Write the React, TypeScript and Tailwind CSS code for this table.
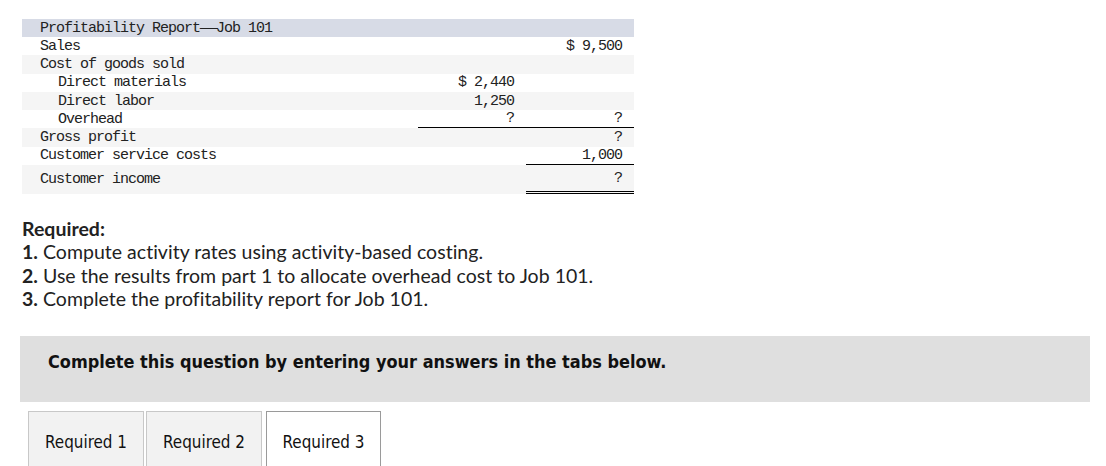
import React from "react";

const mono = { fontFamily: '"Liberation Mono", monospace' };

type Row = {
  label: React.ReactNode;
  indent?: boolean;
  mid?: string;
  right?: string;
  bg: string;
  midLine?: boolean;
  rightLine?: boolean;
  rightDouble?: boolean;
  tall?: boolean;
};

const rows: Row[] = [
  { label: "Sales", right: "$ 9,500", bg: "bg-white" },
  { label: "Cost of goods sold", bg: "bg-[#f5f5f5]" },
  { label: "Direct materials", indent: true, mid: "$ 2,440", bg: "bg-white" },
  { label: "Direct labor", indent: true, mid: "1,250", bg: "bg-[#f5f5f5]" },
  { label: "Overhead", indent: true, mid: "?", right: "?", bg: "bg-white", midLine: true, rightLine: true },
  { label: "Gross profit", right: "?", bg: "bg-[#f5f5f5]" },
  { label: "Customer service costs", right: "1,000", bg: "bg-white", rightLine: true },
  { label: "Customer income", right: "?", bg: "bg-[#f5f5f5]", rightDouble: true, tall: true },
];

export default function App() {
  return (
    <div className="w-[1106px] h-[466px] overflow-hidden bg-white relative">
      <div className="ml-[22px] pt-[19px] w-[612px] text-[15px] tracking-[-1px] text-[#222]" style={mono}>
        <div className="h-[18px] bg-[#d7dbe6] pl-[18px] flex items-center leading-none">
          Profitability Report
          <span className="inline-block w-[16px] text-center">
            <span className="inline-block scale-x-200">—</span>
          </span>
          Job 101
        </div>
        {rows.map((r, i) => (
          <div
            key={i}
            className={`grid grid-cols-[396px_108px_108px] ${r.bg} ${r.tall ? "h-[29px]" : "h-[18.3px]"}`}
          >
            <div className={`flex items-center leading-none ${r.indent ? "pl-[36px]" : "pl-[18px]"}`}>{r.label}</div>
            <div
              className={`flex items-center justify-end pr-[12px] leading-none ${r.midLine ? "border-b border-black" : ""}`}
            >
              {r.mid ?? ""}
            </div>
            <div
              className={`flex items-center justify-end pr-[12px] leading-none ${r.rightLine ? "border-b border-black" : ""} ${r.rightDouble ? "border-b-[3px] border-double border-black" : ""}`}
            >
              {r.right ?? ""}
            </div>
          </div>
        ))}
      </div>

      <div
        className="ml-[22px] mt-[23px] text-[19.5px] tracking-[0.02px] leading-[23.4px] text-[#222]"
        style={{ fontFamily: 'Lato, "Open Sans", sans-serif' }}
      >
        <div className="font-bold">Required:</div>
        <div>
          <span className="font-bold">1.</span> Compute activity rates using activity-based costing.
        </div>
        <div>
          <span className="font-bold">2.</span> Use the results from part 1 to allocate overhead cost to Job 101.
        </div>
        <div>
          <span className="font-bold">3.</span> Complete the profitability report for Job 101.
        </div>
      </div>

      <div
        className="absolute left-[20px] top-[336px] w-[1070px] h-[66px] bg-[#dfdfdf] pl-[28px] pt-[15px] leading-[22px] text-[17.95px] font-bold text-[#111]"
        style={{ fontFamily: '"DejaVu Sans Condensed", "DejaVu Sans", sans-serif' }}
      >
        Complete this question by entering your answers in the tabs below.
      </div>

      <div
        className="absolute left-[28px] top-[411px] flex gap-[2px] text-[16.9px] leading-[20px] text-[#111]"
        style={{ fontFamily: '"DejaVu Sans Condensed", "DejaVu Sans", sans-serif' }}
      >
        <div className="w-[116px] h-[60px] bg-[#f2f2f2] border border-[#c8c8c8] text-center pt-[20px]">Required 1</div>
        <div className="w-[116px] h-[60px] bg-[#f2f2f2] border border-[#c8c8c8] text-center pt-[20px]">Required 2</div>
        <div className="w-[115px] h-[60px] ml-[2px] bg-white border border-[#9a9a9a] text-center pt-[20px]">Required 3</div>
      </div>
    </div>
  );
}
